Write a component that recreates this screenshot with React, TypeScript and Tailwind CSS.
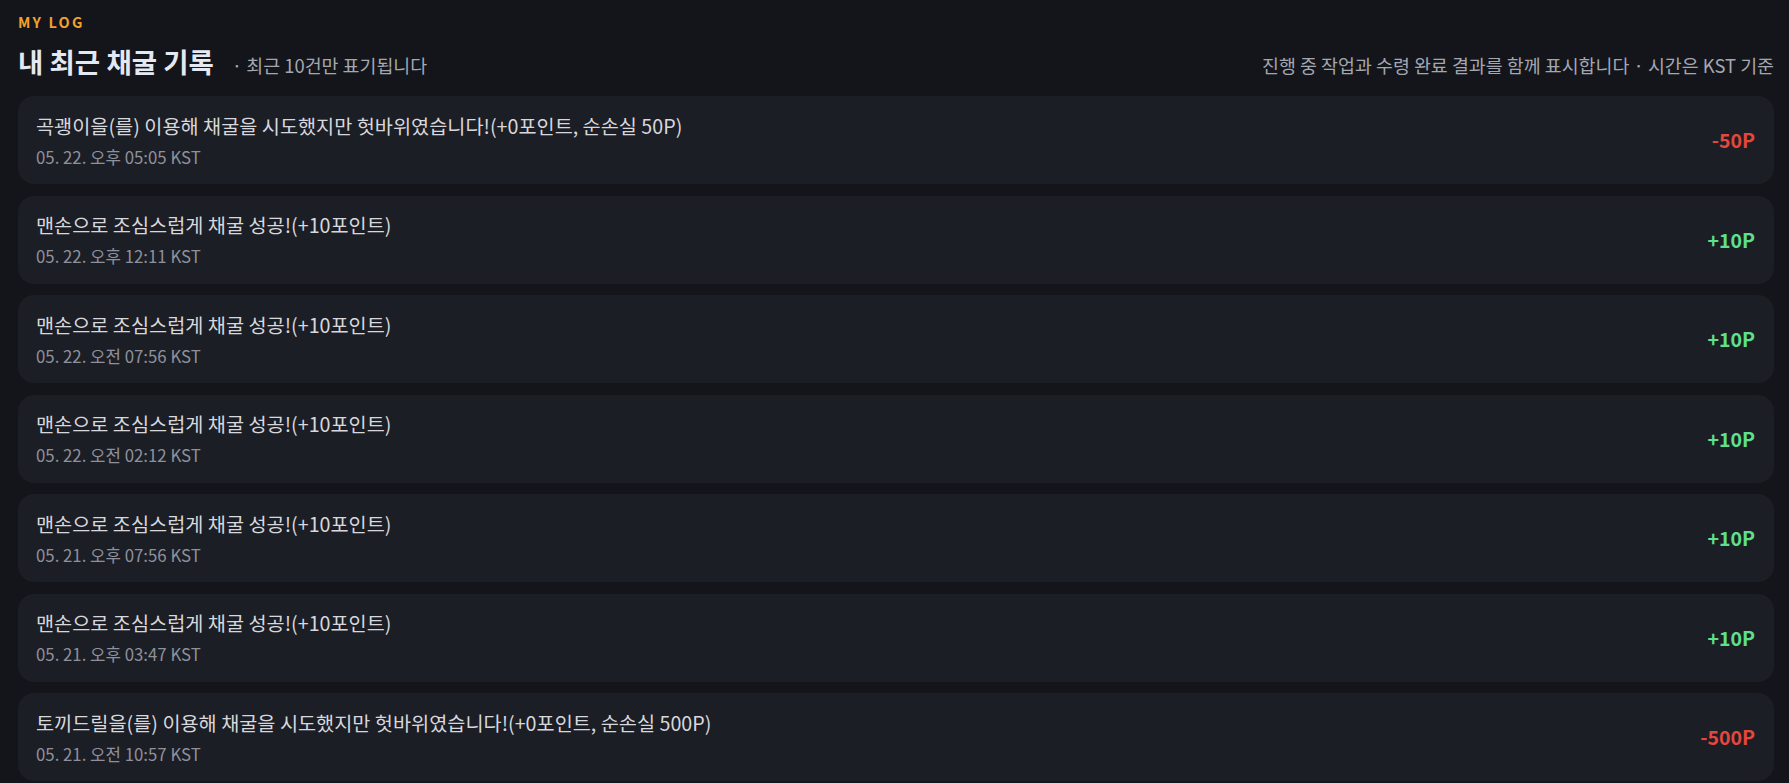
import React from "react";

type Item = { msg: string; time: string; pts: string; pos: boolean };

const items: Item[] = [
  { msg: "곡괭이을(를) 이용해 채굴을 시도했지만 헛바위였습니다!(+0포인트, 순손실 50P)", time: "05. 22. 오후 05:05 KST", pts: "-50P", pos: false },
  { msg: "맨손으로 조심스럽게 채굴 성공!(+10포인트)", time: "05. 22. 오후 12:11 KST", pts: "+10P", pos: true },
  { msg: "맨손으로 조심스럽게 채굴 성공!(+10포인트)", time: "05. 22. 오전 07:56 KST", pts: "+10P", pos: true },
  { msg: "맨손으로 조심스럽게 채굴 성공!(+10포인트)", time: "05. 22. 오전 02:12 KST", pts: "+10P", pos: true },
  { msg: "맨손으로 조심스럽게 채굴 성공!(+10포인트)", time: "05. 21. 오후 07:56 KST", pts: "+10P", pos: true },
  { msg: "맨손으로 조심스럽게 채굴 성공!(+10포인트)", time: "05. 21. 오후 03:47 KST", pts: "+10P", pos: true },
  { msg: "토끼드릴을(를) 이용해 채굴을 시도했지만 헛바위였습니다!(+0포인트, 순손실 500P)", time: "05. 21. 오전 10:57 KST", pts: "-500P", pos: false },
];

export default function App() {
  return (
    <div
      className="min-h-[783px] bg-[#13151b] pl-[18px] pr-[15px] pt-[12px] pb-6"
      style={{ fontFamily: '"Noto Sans CJK KR", "Noto Sans", sans-serif' }}
    >
      <div className="text-[14.5px] leading-[20px] font-bold tracking-[0.15em] text-[#f5a02c]">MY LOG</div>
      <div className="mt-[11px] flex items-end justify-between">
        <div className="flex items-baseline gap-[18px]">
          <h1 className="text-[27.5px] leading-[36px] font-bold text-[#e4e8f2]">내 최근 채굴 기록</h1>
          <span className="text-[18.4px] leading-[26px] text-[#a4a7b0]">· 최근 10건만 표기됩니다</span>
        </div>
        <div className="pb-[1px] text-[18.4px] leading-[26px] text-[#a4a7b0]">
          진행 중 작업과 수령 완료 결과를 함께 표시합니다 · 시간은 KST 기준
        </div>
      </div>
      <div className="mt-[17px] flex flex-col gap-[11.5px]">
        {items.map((it, i) => (
          <div
            key={i}
            className="flex h-[88px] items-center justify-between rounded-2xl bg-[#1c1e26] pl-[18px] pr-[19px]"
          >
            <div className="flex flex-col">
              <div className="text-[19.7px] leading-[28px] text-[#d8d8dc]">{it.msg}</div>
              <div className="mt-[5px] text-[16.8px] leading-[24px] text-[#8e919b]">{it.time}</div>
            </div>
            <div className={"text-[19.5px] font-bold " + (it.pos ? "text-[#5ee08c]" : "text-[#e4473c]")}>{it.pts}</div>
          </div>
        ))}
      </div>
    </div>
  );
}
